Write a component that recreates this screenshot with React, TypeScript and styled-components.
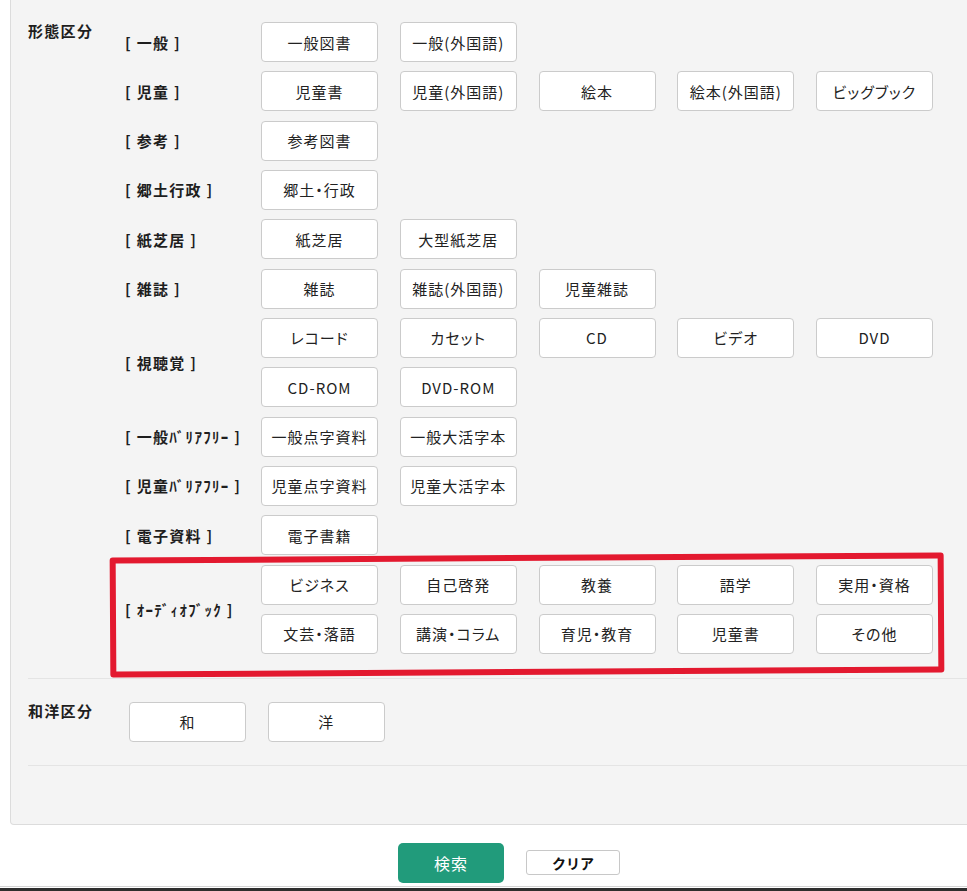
import styled, { createGlobalStyle } from "styled-components";

const GlobalStyle = createGlobalStyle`
  html, body {
    margin: 0;
    padding: 0;
    background: #ffffff;
    overflow: hidden;
  }
  body {
    font-family: "Noto Sans CJK JP", "Noto Sans", sans-serif;
    color: #1e1e1e;
  }
`;

const Page = styled.div`
  width: 1018px;
  height: 891px;
  display: flex;
  flex-direction: column;
`;

const Panel = styled.div`
  margin-left: 10px;
  width: 998px;
  box-sizing: border-box;
  background: #f4f4f4;
  border: 1px solid #dcdcdc;
  border-top: none;
  border-radius: 0 0 4px 4px;
  padding: 0 0 58px 17px;
`;

const Section = styled.div<{ $pad: string }>`
  display: flex;
  align-items: flex-start;
  padding: ${(p) => p.$pad};
  border-bottom: 1px solid #e4e4e4;
`;

const Heading = styled.div<{ $w: number }>`
  width: ${(p) => p.$w}px;
  flex: none;
  font-size: 15px;
  font-weight: 700;
  letter-spacing: 1.3px;
  line-height: 1;
  margin-top: 1px;
`;

const Groups = styled.div`
  display: flex;
  flex-direction: column;
  gap: 9.33px;
`;

const Group = styled.div<{ $marked?: boolean }>`
  position: relative;
  display: flex;
  align-items: center;

  ${(p) =>
    p.$marked &&
    `
    &::after {
      content: "";
      position: absolute;
      left: -15px;
      right: -11px;
      top: -10px;
      bottom: -21px;
      border: 6px solid #e3192f;
      border-radius: 3px;
      transform: rotate(-0.35deg);
      pointer-events: none;
    }
  `}
`;

const Label = styled.div`
  width: 136px;
  flex: none;
  font-size: 15px;
  font-weight: 700;
  letter-spacing: 1.3px;
  white-space: pre;
`;

const Choices = styled.div`
  display: flex;
  flex-wrap: wrap;
  width: 672px;
  column-gap: 21.75px;
  row-gap: 9.33px;
`;

const Choice = styled.button`
  width: 117px;
  height: 40px;
  box-sizing: border-box;
  border: 1px solid #cbcbcb;
  border-radius: 4px;
  background: #ffffff;
  color: #222222;
  font-family: inherit;
  font-size: 15px;
  font-feature-settings: "palt";
  letter-spacing: 1px;
  padding: 0;
  cursor: pointer;
`;

const Actions = styled.div`
  display: flex;
  justify-content: center;
  align-items: center;
  gap: 22px;
  margin-top: 18px;
`;

const SearchButton = styled.button`
  width: 106px;
  height: 40px;
  border: none;
  border-radius: 5px;
  background: #219b7b;
  color: #ffffff;
  font-family: inherit;
  font-size: 16px;
  letter-spacing: 1px;
  cursor: pointer;
`;

const ClearButton = styled.button`
  width: 94px;
  height: 25px;
  box-sizing: border-box;
  border: 1px solid #c8c8c8;
  border-radius: 3px;
  background: #ffffff;
  color: #111111;
  font-family: inherit;
  font-size: 14px;
  font-weight: 700;
  padding: 0;
  cursor: pointer;
`;

const BottomEdge = styled.div`
  margin-top: 3px;
  flex: 1;
  border-top: 1px solid #d4d4d4;
  background: linear-gradient(#ffffff 0 1px, #2e2e2e 1px);
`;

const formGroups: { label: string; items: string[]; marked?: boolean }[] = [
  { label: "[ 一般 ]", items: ["一般図書", "一般(外国語)"] },
  { label: "[ 児童 ]", items: ["児童書", "児童(外国語)", "絵本", "絵本(外国語)", "ビッグブック"] },
  { label: "[ 参考 ]", items: ["参考図書"] },
  { label: "[ 郷土行政 ]", items: ["郷土・行政"] },
  { label: "[ 紙芝居 ]", items: ["紙芝居", "大型紙芝居"] },
  { label: "[ 雑誌 ]", items: ["雑誌", "雑誌(外国語)", "児童雑誌"] },
  { label: "[ 視聴覚 ]", items: ["レコード", "カセット", "CD", "ビデオ", "DVD", "CD-ROM", "DVD-ROM"] },
  { label: "[ 一般ﾊﾞﾘｱﾌﾘｰ ]", items: ["一般点字資料", "一般大活字本"] },
  { label: "[ 児童ﾊﾞﾘｱﾌﾘｰ ]", items: ["児童点字資料", "児童大活字本"] },
  { label: "[ 電子資料 ]", items: ["電子書籍"] },
  {
    label: "[ ｵｰﾃﾞｨｵﾌﾞｯｸ ]",
    items: ["ビジネス", "自己啓発", "教養", "語学", "実用・資格", "文芸・落語", "講演・コラム", "育児・教育", "児童書", "その他"],
    marked: true,
  },
];

export default function App() {
  return (
    <>
      <GlobalStyle />
      <Page>
        <Panel>
          <Section $pad="22px 0 24px">
            <Heading $w={97}>形態区分</Heading>
            <Groups>
              {formGroups.map((g) => (
                <Group key={g.label} $marked={g.marked}>
                  <Label>{g.label}</Label>
                  <Choices>
                    {g.items.map((item) => (
                      <Choice key={item}>{item}</Choice>
                    ))}
                  </Choices>
                </Group>
              ))}
            </Groups>
          </Section>
          <Section $pad="23px 0 23px">
            <Heading $w={101}>和洋区分</Heading>
            <Choices>
              <Choice>和</Choice>
              <Choice>洋</Choice>
            </Choices>
          </Section>
        </Panel>
        <Actions>
          <SearchButton>検索</SearchButton>
          <ClearButton>クリア</ClearButton>
        </Actions>
        <BottomEdge />
      </Page>
    </>
  );
}
